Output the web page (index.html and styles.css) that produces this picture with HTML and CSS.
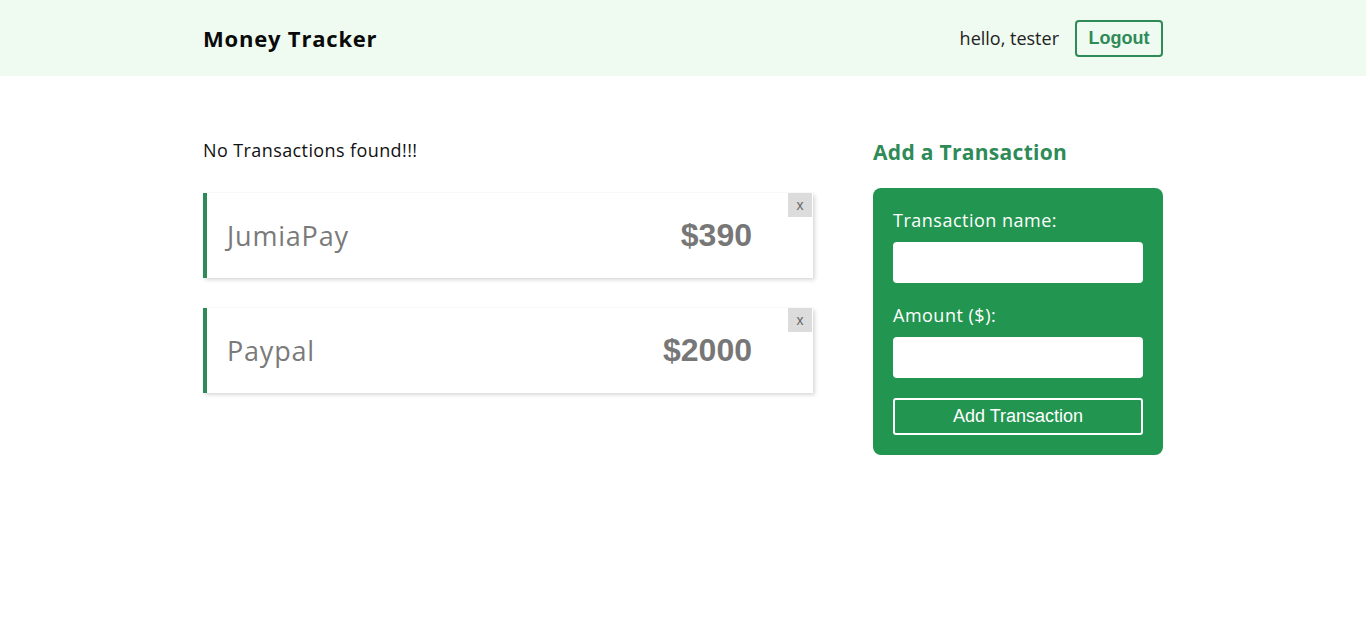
FILE: index.html
```html
<!DOCTYPE html>
<html>
<head>
<meta charset="utf-8">
<title>Money Tracker</title>
<link rel="stylesheet" href="styles.css">
</head>
<body>
<header class="topbar">
  <div class="container topbar-inner">
    <div class="logo">Money Tracker</div>
    <div class="user">
      <span class="greet">hello, tester</span>
      <button class="logout">Logout</button>
    </div>
  </div>
</header>
<main class="container main">
  <section class="list">
    <p class="empty">No Transactions found!!!</p>
    <div class="card">
      <span class="name">JumiaPay</span>
      <span class="amount">$390</span>
      <button class="del">x</button>
    </div>
    <div class="card">
      <span class="name">Paypal</span>
      <span class="amount">$2000</span>
      <button class="del">x</button>
    </div>
  </section>
  <aside class="side">
    <h2 class="side-title">Add a Transaction</h2>
    <form class="form">
      <label class="lbl">Transaction name:</label>
      <input class="field" type="text">
      <label class="lbl">Amount ($):</label>
      <input class="field" type="text">
      <button type="button" class="submit">Add Transaction</button>
    </form>
  </aside>
</main>
</body>
</html>
```
FILE: styles.css
```css
* { box-sizing: border-box; }
body {
  margin: 0;
  font-family: "Open Sans", "Liberation Sans", sans-serif;
  color: #111;
  background: #fff;
}
.container {
  width: 960px;
  margin: 0 auto;
}
.topbar {
  background: #effaf0;
  height: 76px;
}
.topbar-inner {
  height: 76px;
  display: flex;
  align-items: center;
  justify-content: space-between;
}
.logo {
  font-size: 22px;
  font-weight: 700;
  letter-spacing: 0.8px;
  color: #0a0a0a;
}
.user {
  display: flex;
  align-items: center;
  gap: 16px;
}
.greet {
  font-size: 18px;
  color: #222;
}
.logout {
  height: 37px;
  width: 88px;
  border: 2px solid #2e8b57;
  border-radius: 4px;
  background: transparent;
  color: #2e8b57;
  font-family: "Liberation Sans", Arial, sans-serif;
  font-weight: 700;
  font-size: 18px;
  padding: 0;
}
.main {
  display: flex;
  gap: 60px;
  padding-top: 73px;
}
.list {
  width: 610px;
}
.empty {
  margin: 0 0 33px;
  font-size: 18px;
  letter-spacing: 0.4px;
  line-height: 1;
  position: relative;
  top: -8px;
  color: #111;
}
.card {
  position: relative;
  height: 85px;
  background: #fff;
  border-left: 4px solid #2e8b57;
  box-shadow: 2px 2px 4px rgba(0,0,0,0.15), 0 0 1px rgba(0,0,0,0.08);
  display: flex;
  align-items: center;
  justify-content: space-between;
  padding: 0 61px 0 20px;
  margin-bottom: 30px;
  margin-top: -7px;
}
.card + .card { margin-top: 0; }
.name {
  font-size: 27px;
  letter-spacing: 0.8px;
  color: #7a7a7a;
}
.amount {
  font-family: "Liberation Sans", Arial, sans-serif;
  font-weight: 700;
  font-size: 32px;
  color: #777;
}
.del {
  position: absolute;
  top: 0;
  right: 1px;
  width: 24px;
  height: 24px;
  border: none;
  background: #dcdcdc;
  color: #666;
  font-family: "Liberation Sans", Arial, sans-serif;
  font-size: 14px;
  padding: 0;
}
.side {
  width: 290px;
}
.side-title {
  margin: 0 0 22px;
  font-size: 21px;
  letter-spacing: 0.3px;
  font-weight: 700;
  color: #2e8b57;
  position: relative;
  top: -10px;
  line-height: 1.3;
}
.form {
  background: #229650;
  border-radius: 8px;
  padding: 20px 20px 20px;
  display: flex;
  flex-direction: column;
  margin-top: -10px;
}
.lbl {
  color: #fff;
  font-size: 18px;
  letter-spacing: 0.5px;
  line-height: 24px;
  margin-bottom: 10px;
}
.field {
  height: 41px;
  border: none;
  border-radius: 4px;
  background: #fff;
  margin-bottom: 20px;
}
.submit {
  height: 37px;
  border: 2px solid #fff;
  border-radius: 3px;
  background: transparent;
  color: #fff;
  font-family: "Liberation Sans", Arial, sans-serif;
  font-size: 18px;
  padding: 0;
}
```
